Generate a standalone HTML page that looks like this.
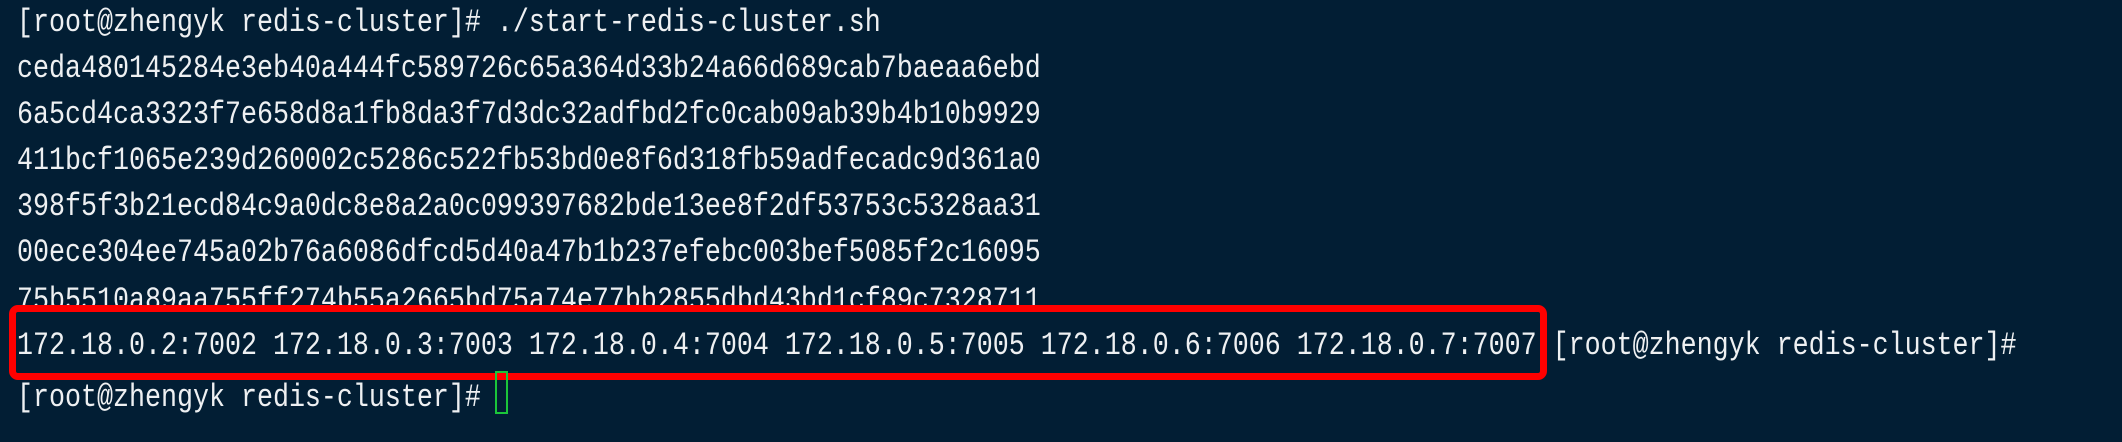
<!DOCTYPE html>
<html><head><meta charset="utf-8"><style>
html,body{margin:0;padding:0;}
body{width:2122px;height:442px;background:#021e34;position:relative;overflow:hidden;font-family:"Liberation Mono",monospace;font-size:26.67px;color:#eef0f2;}
.l{position:absolute;left:17px;line-height:26.67px;white-space:pre;transform:scaleY(1.2);transform-origin:0 0;}
.box{position:absolute;left:9px;top:305px;width:1524px;height:61px;border:7px solid #ff0000;border-radius:9px;background:#021e34;}
.cur{position:absolute;left:495px;top:371px;width:13px;height:43px;border:2px solid #1bc63a;box-sizing:border-box;}
</style></head><body>
<div class="l" style="top:8px">[root@zhengyk redis-cluster]# ./start-redis-cluster.sh</div>
<div class="l" style="top:54px">ceda480145284e3eb40a444fc589726c65a364d33b24a66d689cab7baeaa6ebd</div>
<div class="l" style="top:100px">6a5cd4ca3323f7e658d8a1fb8da3f7d3dc32adfbd2fc0cab09ab39b4b10b9929</div>
<div class="l" style="top:146px">411bcf1065e239d260002c5286c522fb53bd0e8f6d318fb59adfecadc9d361a0</div>
<div class="l" style="top:192px">398f5f3b21ecd84c9a0dc8e8a2a0c099397682bde13ee8f2df53753c5328aa31</div>
<div class="l" style="top:238px">00ece304ee745a02b76a6086dfcd5d40a47b1b237efebc003bef5085f2c16095</div>
<div class="l" style="top:286px">75b5510a89aa755ff274b55a2665bd75a74e77bb2855dbd43bd1cf89c7328711</div>
<div class="box"></div>
<div class="l" style="top:331px">172.18.0.2:7002 172.18.0.3:7003 172.18.0.4:7004 172.18.0.5:7005 172.18.0.6:7006 172.18.0.7:7007 [root@zhengyk redis-cluster]#</div>
<div class="l" style="top:383px">[root@zhengyk redis-cluster]#</div>
<div class="cur"></div>
</body></html>
